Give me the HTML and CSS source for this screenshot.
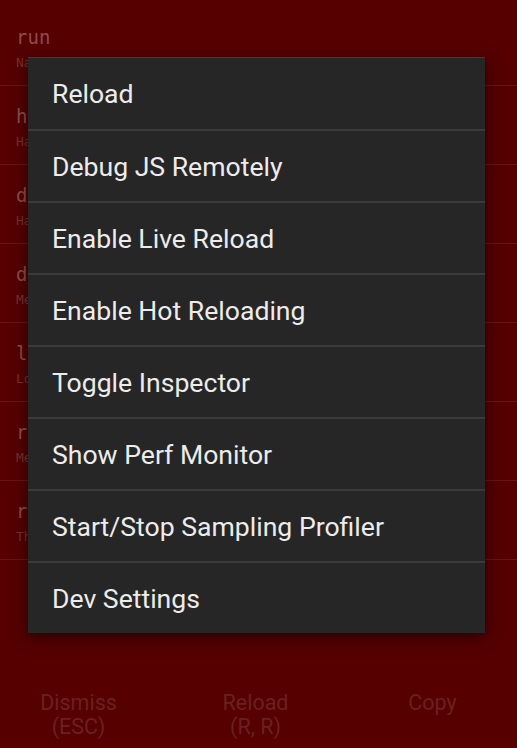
FILE: index.html
```html
<!DOCTYPE html>
<html lang="en">
<head>
  <meta charset="UTF-8" />
  <meta name="viewport" content="width=device-width, initial-scale=1.0"/>
  <title>Dev Menu</title>
  <link rel="stylesheet" href="styles.css">
</head>
<body>

  <div class="redbox">
    <ul class="stack">
      <li><div class="fn">run</div><div class="src">NativeRunnable.java:65</div></li>
      <li><div class="fn">handleCallback</div><div class="src">Handler.java:739</div></li>
      <li><div class="fn">dispatchMessage</div><div class="src">Handler.java:95</div></li>
      <li><div class="fn">dispatchMessage</div><div class="src">MessageQueueThreadHandler.java:31</div></li>
      <li><div class="fn">loop</div><div class="src">Looper.java:148</div></li>
      <li><div class="fn">run</div><div class="src">MessageQueueThreadImpl.java:196</div></li>
      <li><div class="fn">run</div><div class="src">Thread.java:818</div></li>
    </ul>
    <div class="actions">
      <button>Dismiss<br>(ESC)</button>
      <button>Reload<br>(R, R)</button>
      <button>Copy</button>
    </div>
  </div>

  <ul class="menu">
    <li>Reload</li>
    <li>Debug JS Remotely</li>
    <li>Enable Live Reload</li>
    <li>Enable Hot Reloading</li>
    <li>Toggle Inspector</li>
    <li>Show Perf Monitor</li>
    <li>Start/Stop Sampling Profiler</li>
    <li>Dev Settings</li>
  </ul>

</body>
</html>
```

FILE: styles.css
```css
* {
  box-sizing: border-box;
  margin: 0;
  padding: 0;
}

body {
  width: 517px;
  height: 748px;
  background: #560000;
  font-family: Roboto, 'Noto Sans', sans-serif;
  overflow: hidden;
}

.redbox {
  height: 100%;
  display: flex;
  flex-direction: column;
}

.stack {
  list-style: none;
  flex: 1;
  padding-top: 7px;
}

.stack li {
  height: 79px;
  padding: 18px 16px 0;
  border-bottom: 1px solid #6a1414;
  white-space: nowrap;
  overflow: hidden;
}

.fn {
  font-family: 'DejaVu Sans Mono', monospace;
  font-size: 19px;
  line-height: 24px;
  color: #8c4c4c;
}

.src {
  font-family: 'DejaVu Sans Mono', monospace;
  font-size: 13px;
  line-height: 20px;
  margin-top: 4px;
  color: #733232;
}

.actions {
  display: flex;
  height: 88px;
  padding-top: 31px;
  margin: 0 -4px 0 -10px;
}

.actions button {
  flex: 1;
  background: none;
  border: none;
  font-family: Roboto, sans-serif;
  font-size: 21.5px;
  line-height: 24px;
  color: #6a2020;
  align-self: flex-start;
}

.menu {
  list-style: none;
  position: absolute;
  left: 28px;
  top: 57px;
  width: 457px;
  background: #262626;
  border-top: 1px solid #3c3c3c;
  box-shadow: 0 4px 14px rgba(0, 0, 0, 0.55);
}

.menu li {
  height: 72px;
  padding-left: 24px;
  display: flex;
  align-items: center;
  font-size: 26.6px;
  color: #ececec;
  border-top: 2px solid #3a3a3a;
}

.menu li:first-child {
  border-top: none;
  height: 71px;
}
```
